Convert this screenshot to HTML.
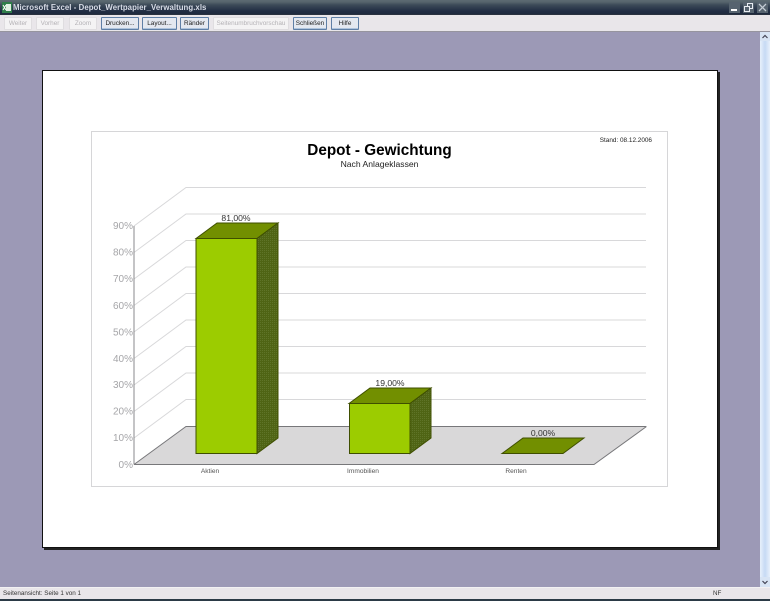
<!DOCTYPE html>
<html><head><meta charset="utf-8"><style>
html,body{margin:0;padding:0;width:770px;height:601px;overflow:hidden;background:#9c99b6;font-family:"Liberation Sans",sans-serif}
.a{position:absolute}
#t{left:0;top:0;width:770px;height:15px;background:linear-gradient(#5c6a72 0,#56646c 2px,#3c4a58 5px,#222e44 11px,#1f2a3e 14px,#33373f 15px)}
#t span{position:absolute;left:13px;top:2px;font:bold 7.8px/11px "Liberation Sans",sans-serif;color:#d8dce6;letter-spacing:.06px;white-space:nowrap}
#bar{left:0;top:15px;width:770px;height:16px;background:#e9e6ea;border-bottom:1px solid #96949e}
.b{position:absolute;top:2px;height:11px;box-sizing:content-box;font-size:6.4px;line-height:11px;text-align:center;white-space:nowrap;border-radius:1px;overflow:hidden}
.d{background:#f4f3f4;border:1px solid #dfdde0;color:#b4b2b6}
.e{background:#e4e8f0;border:1px solid #5f7fa6;color:#222;box-shadow:inset 0 -1px 0 #aec3dc}
.w{position:absolute;top:2px;width:11px;height:11px;background:#56636f}
#s{left:760px;top:32px;width:10px;height:555px;background:linear-gradient(90deg,#e8f0fb,#c6daf4 50%,#e8f0fb)}
#st{left:0;top:587px;width:770px;height:11px;background:#e9e6ea;border-top:1px solid #f2f1f3;font-size:6.3px;line-height:11px;color:#333}
#bt{left:0;top:599px;width:770px;height:2px;background:#2b3a46}
#p{left:42px;top:70px;width:674px;height:476px;background:#fff;border:1px solid #111;box-shadow:2px 2px 0 #222}
text{font-family:"Liberation Sans",sans-serif}
</style></head><body>
<div class="a" id="t">
<svg class="a" style="left:2px;top:2px" width="10" height="11"><rect width="10" height="11" fill="#2f7d4a"/><rect x="4" y="2" width="5" height="7" fill="#dfeee2"/><path d="M1 3l3 5M4 3L1 8" stroke="#fff" stroke-width="1"/></svg>
<span>Microsoft Excel - Depot_Wertpapier_Verwaltung.xls</span>
<div class="w" style="left:729px"><div class="a" style="left:2px;top:7px;width:6px;height:2px;background:#fff"></div></div>
<div class="w" style="left:743px"><svg class="a" style="left:0;top:0" width="11" height="11" fill="none" stroke="#e8ecf2"><rect x="4.5" y="1.5" width="5" height="5"/><rect x="1.5" y="4.5" width="5" height="5" fill="#56636f"/></svg></div>
<div class="w" style="left:757px"><svg class="a" style="left:0;top:0" width="11" height="11" stroke="#c4ccd4" stroke-width="1.3"><path d="M2 2l7 7M9 2l-7 7"/></svg></div>
</div>
<div class="a" id="bar">
<div class="b d" style="left:4px;width:26px">Weiter</div>
<div class="b d" style="left:36px;width:26px">Vorher</div>
<div class="b d" style="left:69px;width:26px">Zoom</div>
<div class="b e" style="left:101px;width:36px">Drucken...</div>
<div class="b e" style="left:142px;width:33px">Layout...</div>
<div class="b e" style="left:180px;width:27px">Ränder</div>
<div class="b d" style="left:213px;width:74px">Seitenumbruchvorschau</div>
<div class="b e" style="left:293px;width:32px">Schließen</div>
<div class="b e" style="left:331px;width:26px">Hilfe</div>
</div>
<div class="a" id="p"></div>
<svg class="a" style="left:0;top:0" width="770" height="601">
<defs><pattern id="dm" width="2" height="2" patternUnits="userSpaceOnUse"><rect width="2" height="2" fill="#4f6414"/><rect width="1" height="1" fill="#5f7428"/></pattern></defs>
<rect x="91.5" y="131.5" width="576" height="355" fill="#fff" stroke="#d6d6d8"/>
<text x="379.500" y="155" font-size="15.300" font-weight="bold" text-anchor="middle" fill="#000">Depot - Gewichtung</text>
<text x="379.500" y="167" font-size="8.600" text-anchor="middle" fill="#222">Nach Anlageklassen</text>
<text x="652" y="142" font-size="6.400" text-anchor="end" fill="#222">Stand: 08.12.2006</text>
<g fill="none" stroke="#d8d8da" stroke-width="1">
<path d="M134 226L186 187.500H646M134 252.500L186 214H646M134 279L186 240.500H646M134 305.500L186 267H646M134 332L186 293.500H646M134 358.500L186 320H646M134 385L186 346.500H646M134 411.500L186 373H646M134 438L186 399.500H646"/>
</g>
<path d="M134 464.500L186 426.500H646.500L594 464.500Z" fill="#d9d8d9"/>
<path d="M134 464.500L186 426.500H646" fill="none" stroke="#77777a"/>
<path d="M646.500 426.500L594 464.500H134" fill="none" stroke="#77777a"/>
<path d="M134 226V464.500" stroke="#8a8a8c" stroke-width="1"/>
<g font-size="10" fill="#a5a5a8" text-anchor="end">
<text x="133" y="229">90%</text><text x="133" y="255.500">80%</text><text x="133" y="282">70%</text><text x="133" y="309">60%</text><text x="133" y="335.500">50%</text><text x="133" y="362">40%</text><text x="133" y="388">30%</text><text x="133" y="414.500">20%</text><text x="133" y="441">10%</text><text x="133" y="468">0%</text>
</g>
<g stroke="#3f4f00" stroke-width="1">
<path d="M196 238.500L217 223H278L257 238.500Z" fill="#728f00"/>
<path d="M257 238.500L278 223V438L257 453.500Z" fill="url(#dm)"/>
<rect x="196" y="238.500" width="61" height="215" fill="#9ccc00"/>
<path d="M349 403.500L370 388H431L410 403.500Z" fill="#728f00"/>
<path d="M410 403.500L431 388V438L410 453.500Z" fill="url(#dm)"/>
<rect x="349.500" y="403.500" width="60.500" height="50" fill="#9ccc00"/>
<path d="M502 453.500L523 438H584L563 453.500Z" fill="#728f00"/>
</g>
<g font-size="8.600" fill="#333" text-anchor="middle">
<text x="236" y="221">81,00%</text><text x="390" y="386">19,00%</text><text x="543" y="436">0,00%</text>
</g>
<g font-size="6.600" fill="#555" text-anchor="middle">
<text x="210" y="473">Aktien</text><text x="363" y="473">Immobilien</text><text x="516" y="473">Renten</text>
</g>
</svg>
<div class="a" id="s">
<svg class="a" style="left:0;top:0" width="10" height="10"><rect width="10" height="9" fill="#d8e4f4"/><path d="M2.500 6L5 3.500 7.500 6" fill="none" stroke="#445" stroke-width="1.200"/></svg>
<svg class="a" style="left:0;top:545px" width="10" height="10"><rect width="10" height="10" fill="#d8e4f4"/><path d="M2.500 4L5 6.500 7.500 4" fill="none" stroke="#445" stroke-width="1.200"/></svg>
</div>
<div class="a" id="st"><span class="a" style="left:3px;top:0">Seitenansicht: Seite 1 von 1</span><span class="a" style="left:713px;top:0">NF</span></div>
<div class="a" id="bt"></div>
</body></html>
